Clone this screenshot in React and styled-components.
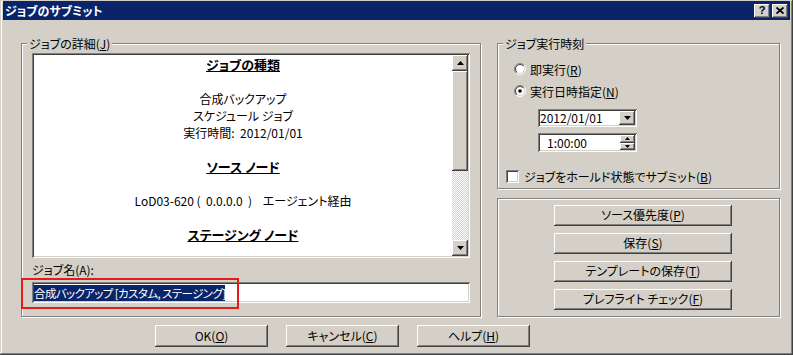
import React from 'react';
import styled, { createGlobalStyle } from 'styled-components';

const GlobalStyle = createGlobalStyle`
  html, body {
    margin: 0;
    padding: 0;
    background: #d4d0c8;
  }
  body {
    font-family: "Noto Sans CJK JP", "Noto Sans", sans-serif;
    font-size: 12px;
    font-feature-settings: "palt" 1;
    color: #000;
  }
  * {
    box-sizing: border-box;
  }
`;

const raised = `
  background: #d4d0c8;
  box-shadow: inset -1px -1px #404040, inset 1px 1px #fff,
    inset -2px -2px #808080, inset 2px 2px #d4d0c8;
`;

const sunken = `
  background: #fff;
  box-shadow: inset 1px 1px #808080, inset -1px -1px #fff,
    inset 2px 2px #404040, inset -2px -2px #d4d0c8;
`;

const Window = styled.div`
  width: 793px;
  height: 355px;
  display: flex;
  flex-direction: column;
  padding: 1px 3px 3px 3px;
  background: #d4d0c8;
  box-shadow: inset -1px -1px #404040, inset 1px 1px #d4d0c8,
    inset -2px -2px #808080, inset 2px 2px #fff;
`;

const TitleBar = styled.div`
  height: 19px;
  display: flex;
  align-items: center;
  justify-content: space-between;
  padding: 0 2px 0 2px;
  background: #0a246a;
  color: #fff;
  font-weight: bold;
  font-size: 12px;
`;

const TitleButtons = styled.div`
  display: flex;
  gap: 2px;
`;

const TitleButton = styled.div`
  ${raised};
  width: 16px;
  height: 14px;
  display: flex;
  align-items: center;
  justify-content: center;
  color: #000;
  font-family: "Liberation Sans", sans-serif;
  font-size: 11px;
  font-weight: bold;
  line-height: 1;
`;

const Body = styled.div`
  flex: 1;
  display: flex;
  flex-direction: column;
  padding: 23px 10px 0 18px;
`;

const Main = styled.div`
  display: flex;
  gap: 16px;
  align-items: flex-start;
`;

const Group = styled.div`
  position: relative;
  width: ${(p) => p.$w}px;
  height: ${(p) => p.$h}px;
  border: 1px solid #808080;
  box-shadow: inset 1px 1px #fff, 1px 1px #fff;
  padding: ${(p) => p.$pad};
  display: flex;
  flex-direction: column;
`;

const Legend = styled.span`
  position: absolute;
  top: -8px;
  left: 5px;
  padding: 0 2px;
  line-height: 15px;
  background: #d4d0c8;
`;

const RightCol = styled.div`
  display: flex;
  flex-direction: column;
  gap: 9px;
`;

const ListBox = styled.div`
  ${sunken};
  width: 438px;
  height: 205px;
  padding: 2px;
  display: flex;
`;

const ListContent = styled.div`
  flex: 1;
  overflow: hidden;
  padding-top: 1px;
  display: flex;
  flex-direction: column;
  align-items: center;
`;

const Line = styled.div`
  height: 17px;
  line-height: 17px;
  white-space: pre;
  font-size: ${(p) => (p.$head ? 13 : 12)}px;
  font-weight: ${(p) => (p.$head ? 'bold' : 'normal')};
  text-decoration: ${(p) => (p.$head ? 'underline' : 'none')};
`;

const ScrollBar = styled.div`
  width: 16px;
  display: flex;
  flex-direction: column;
`;

const ScrollButton = styled.div`
  ${raised};
  height: ${(p) => p.$h}px;
  display: flex;
  align-items: center;
  justify-content: center;
`;

const Track = styled.div`
  flex: 1;
  background: repeating-conic-gradient(#fff 0 25%, #d4d0c8 0 50%) 0 0 / 2px 2px;
`;

const FieldLabel = styled.div`
  padding-top: 5px;
  margin-bottom: 5px;
  line-height: 14px;
`;

const FieldWrap = styled.div`
  position: relative;
`;

const TextInput = styled.div`
  ${sunken};
  width: 438px;
  height: 21px;
  padding: 3px 2px 0 2px;
  line-height: 15px;
`;

const Selected = styled.span`
  background: #0a246a;
  color: #fff;
  white-space: pre;
  font-size: 11.5px;
  letter-spacing: -0.6px;
`;

const RedBox = styled.div`
  position: absolute;
  left: -11px;
  top: -4px;
  width: 218px;
  height: 31px;
  border: 2px solid #e31b1b;
`;

const OptionRow = styled.div`
  display: flex;
  align-items: center;
  gap: ${(p) => p.$gap}px;
  height: 16px;
  margin-left: ${(p) => p.$indent}px;
  margin-top: ${(p) => p.$top}px;
`;

const CheckBox = styled.div`
  ${sunken};
  width: 13px;
  height: 13px;
`;

const Combo = styled.div`
  ${sunken};
  width: 99px;
  height: ${(p) => p.$h}px;
  margin-left: 32px;
  margin-top: ${(p) => p.$top}px;
  padding: 2px;
  display: flex;
  align-items: center;
`;

const ComboText = styled.div`
  flex: 1;
  padding-left: ${(p) => p.$pad}px;
  line-height: 14px;
`;

const DropButton = styled.div`
  ${raised};
  width: 16px;
  height: 14px;
  display: flex;
  align-items: center;
  justify-content: center;
`;

const Spin = styled.div`
  width: 15px;
  height: 15px;
  display: flex;
  flex-direction: column;
`;

const SpinButton = styled.div`
  ${raised};
  flex: 1;
  display: flex;
  align-items: center;
  justify-content: center;
`;

const ActionList = styled.div`
  display: flex;
  flex-direction: column;
  gap: 7px;
`;

const Button = styled.div`
  ${raised};
  width: ${(p) => p.$w}px;
  height: ${(p) => p.$h}px;
  display: flex;
  align-items: center;
  justify-content: center;
  line-height: 14px;
  padding-bottom: 1px;
`;

const ButtonRow = styled.div`
  display: flex;
  gap: 18px;
  margin-top: 8px;
  padding-left: 134px;
`;

const U = styled.span`
  text-decoration: underline;
`;

function Arrow({ down, w = 7, h = 4 }) {
  return (
    <svg width={w} height={h} viewBox={`0 0 ${w} ${h}`}>
      {down ? (
        <polygon points={`0,0 ${w},0 ${w / 2},${h}`} fill="#000" />
      ) : (
        <polygon points={`0,${h} ${w},${h} ${w / 2},0`} fill="#000" />
      )}
    </svg>
  );
}

function Radio({ checked }) {
  return (
    <svg width="12" height="12" viewBox="0 0 12 12">
      <defs>
        <linearGradient id="ro" x1="0" y1="0" x2="1" y2="1">
          <stop offset="50%" stopColor="#808080" />
          <stop offset="50%" stopColor="#fff" />
        </linearGradient>
        <linearGradient id="ri" x1="0" y1="0" x2="1" y2="1">
          <stop offset="50%" stopColor="#404040" />
          <stop offset="50%" stopColor="#d4d0c8" />
        </linearGradient>
      </defs>
      <circle cx="6" cy="6" r="5.5" fill="none" stroke="url(#ro)" strokeWidth="1" />
      <circle cx="6" cy="6" r="4.5" fill="#fff" stroke="url(#ri)" strokeWidth="1" />
      {checked && <circle cx="6" cy="6" r="1.8" fill="#000" />}
    </svg>
  );
}

function CloseGlyph() {
  return (
    <svg width="8" height="7" viewBox="0 0 8 7">
      <path d="M0.5 0.5 L7.5 6.5 M7.5 0.5 L0.5 6.5" stroke="#000" strokeWidth="1.8" />
    </svg>
  );
}

export default function App() {
  return (
    <>
      <GlobalStyle />
      <Window>
        <TitleBar>
          <span>ジョブのサブミット</span>
          <TitleButtons>
            <TitleButton>?</TitleButton>
            <TitleButton>
              <CloseGlyph />
            </TitleButton>
          </TitleButtons>
        </TitleBar>
        <Body>
          <Main>
            <Group $w={460} $h={274} $pad="9px 10px 0 10px">
              <Legend>
                ジョブの詳細(<U>J</U>)
              </Legend>
              <ListBox>
                <ListContent>
                  <Line $head>ジョブの種類</Line>
                  <Line />
                  <Line>合成バックアップ</Line>
                  <Line>スケジュール ジョブ</Line>
                  <Line>実行時間:  2012/01/01</Line>
                  <Line />
                  <Line $head>ソース ノード</Line>
                  <Line />
                  <Line>LoD03-620 (  0.0.0.0  )    エージェント経由</Line>
                  <Line />
                  <Line $head>ステージング ノード</Line>
                </ListContent>
                <ScrollBar>
                  <ScrollButton $h={16}>
                    <Arrow />
                  </ScrollButton>
                  <ScrollButton $h={100} />
                  <Track />
                  <ScrollButton $h={16}>
                    <Arrow down />
                  </ScrollButton>
                </ScrollBar>
              </ListBox>
              <FieldLabel>ジョブ名(A):</FieldLabel>
              <FieldWrap>
                <TextInput>
                  <Selected>合成バックアップ [カスタム, ステージング]</Selected>
                </TextInput>
                <RedBox />
              </FieldWrap>
            </Group>
            <RightCol>
              <Group $w={283} $h={146} $pad="17px 8px 0 8px">
                <Legend>ジョブ実行時刻</Legend>
                <OptionRow $gap={4} $indent={8} $top={0}>
                  <Radio />
                  <span>
                    即実行(<U>R</U>)
                  </span>
                </OptionRow>
                <OptionRow $gap={4} $indent={8} $top={6}>
                  <Radio checked />
                  <span>
                    実行日時指定(<U>N</U>)
                  </span>
                </OptionRow>
                <Combo $h={18} $top={10}>
                  <ComboText $pad={0}>2012/01/01</ComboText>
                  <DropButton>
                    <Arrow down />
                  </DropButton>
                </Combo>
                <Combo $h={19} $top={6}>
                  <ComboText $pad={7}>1:00:00</ComboText>
                  <Spin>
                    <SpinButton>
                      <Arrow w={5} h={3} />
                    </SpinButton>
                    <SpinButton>
                      <Arrow down w={5} h={3} />
                    </SpinButton>
                  </Spin>
                </Combo>
                <OptionRow $gap={5} $indent={0} $top={16}>
                  <CheckBox />
                  <span>
                    ジョブをホールド状態でサブミット(<U>B</U>)
                  </span>
                </OptionRow>
              </Group>
              <Group $w={283} $h={119} $pad="6px 0 0 56px">
                <ActionList>
                  <Button $w={178} $h={21}>
                    <span>
                      ソース優先度(<U>P</U>)
                    </span>
                  </Button>
                  <Button $w={178} $h={21}>
                    <span>
                      保存(<U>S</U>)
                    </span>
                  </Button>
                  <Button $w={178} $h={21}>
                    <span>
                      テンプレートの保存(<U>T</U>)
                    </span>
                  </Button>
                  <Button $w={178} $h={21}>
                    <span>
                      プレフライト チェック(<U>F</U>)
                    </span>
                  </Button>
                </ActionList>
              </Group>
            </RightCol>
          </Main>
          <ButtonRow>
            <Button $w={113} $h={22}>
              <span>
                OK(<U>O</U>)
              </span>
            </Button>
            <Button $w={113} $h={22}>
              <span>
                キャンセル(<U>C</U>)
              </span>
            </Button>
            <Button $w={113} $h={22}>
              <span>
                ヘルプ(<U>H</U>)
              </span>
            </Button>
          </ButtonRow>
        </Body>
      </Window>
    </>
  );
}
